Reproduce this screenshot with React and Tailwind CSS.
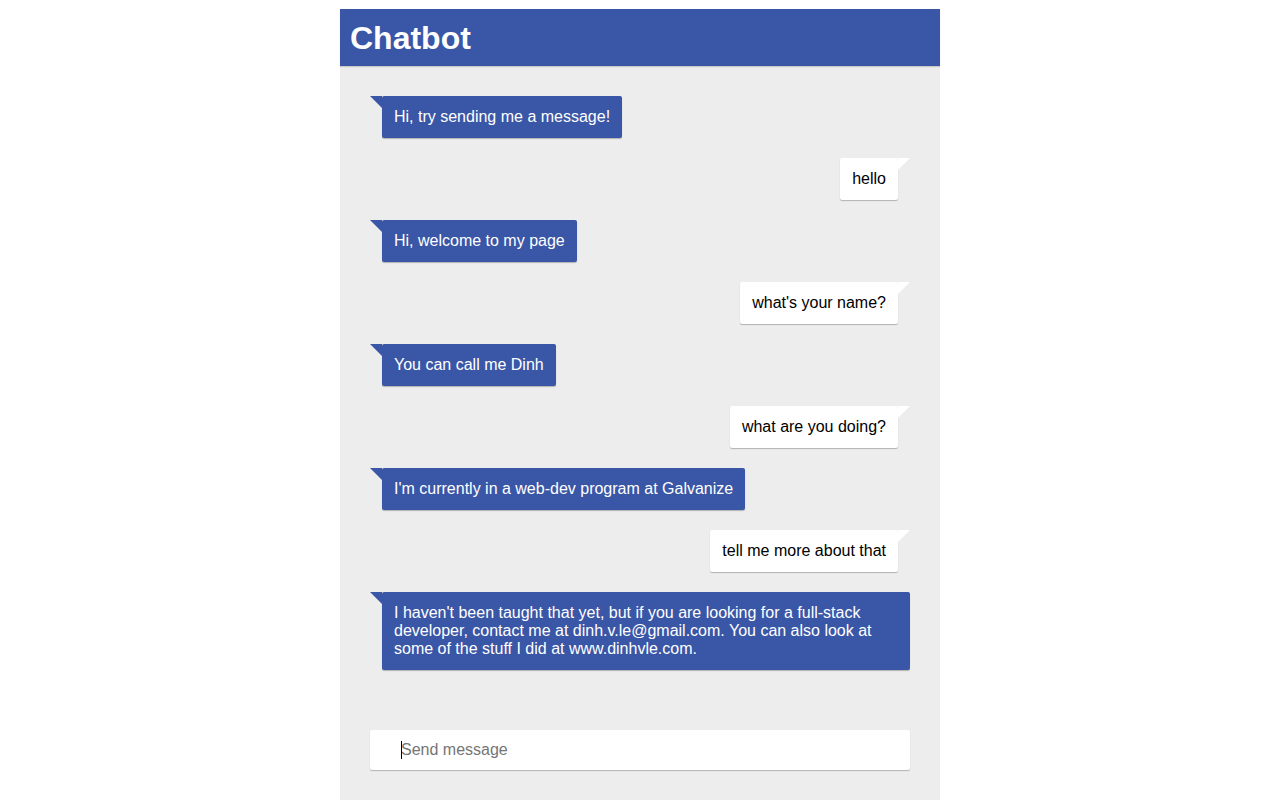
import React from "react";

const messages = [
  { from: "bot", text: "Hi, try sending me a message!" },
  { from: "user", text: "hello" },
  { from: "bot", text: "Hi, welcome to my page" },
  { from: "user", text: "what's your name?" },
  { from: "bot", text: "You can call me Dinh" },
  { from: "user", text: "what are you doing?" },
  { from: "bot", text: "I'm currently in a web-dev program at Galvanize" },
  { from: "user", text: "tell me more about that" },
  {
    from: "bot",
    text: "I haven't been taught that yet, but if you are looking for a full-stack developer, contact me at dinh.v.le@gmail.com. You can also look at some of the stuff I did at www.dinhvle.com.",
  },
];

function Bubble({ from, text }) {
  if (from === "bot") {
    return (
      <div className="flex justify-start pl-3">
        <div className="relative max-w-[528px] bg-[#3a56a7] text-white px-3 py-3 text-[16px] leading-[18px] rounded-[2px] shadow-[0_1px_1px_rgba(0,0,0,0.25)]">
          <span className="absolute -left-3 top-0 w-0 h-0 border-t-[12px] border-t-[#3a56a7] border-l-[12px] border-l-transparent"></span>
          {text}
        </div>
      </div>
    );
  }
  return (
    <div className="flex justify-end pr-3">
      <div className="relative bg-white text-black px-3 py-3 text-[16px] leading-[18px] rounded-[2px] shadow-[0_1px_1px_rgba(0,0,0,0.25)]">
        <span className="absolute -right-3 top-0 w-0 h-0 border-t-[12px] border-t-white border-r-[12px] border-r-transparent"></span>
        {text}
      </div>
    </div>
  );
}

export default function App() {
  return (
    <div className="w-full h-[800px] bg-white pt-[9px] overflow-hidden" style={{ fontFamily: '"Liberation Sans", Arial, sans-serif' }}>
      <div className="w-[600px] mx-auto h-[791px] bg-[#ededed] flex flex-col">
        <div className="h-[57px] bg-[#3a56a7] flex items-center px-[10px] shadow-[0_1px_1px_rgba(0,0,0,0.15)]">
          <h1 className="text-white text-[32px] font-bold">Chatbot</h1>
        </div>
        <div className="px-[30px] pt-[30px] flex flex-col gap-5">
          {messages.map((m, i) => (
            <Bubble key={i} {...m} />
          ))}
        </div>
        <div className="px-[30px] mt-[60px]">
          <div className="relative h-10 bg-white rounded-[2px] shadow-[0_1px_1px_rgba(0,0,0,0.25)] flex items-center pl-[31px]">
            <span className="absolute left-[31px] top-[11px] w-px h-[18px] bg-black"></span>
            <input
              className="w-full outline-none text-[16px] text-black placeholder:text-[#757575] bg-transparent"
              placeholder="Send message"
            />
          </div>
        </div>
      </div>
    </div>
  );
}
